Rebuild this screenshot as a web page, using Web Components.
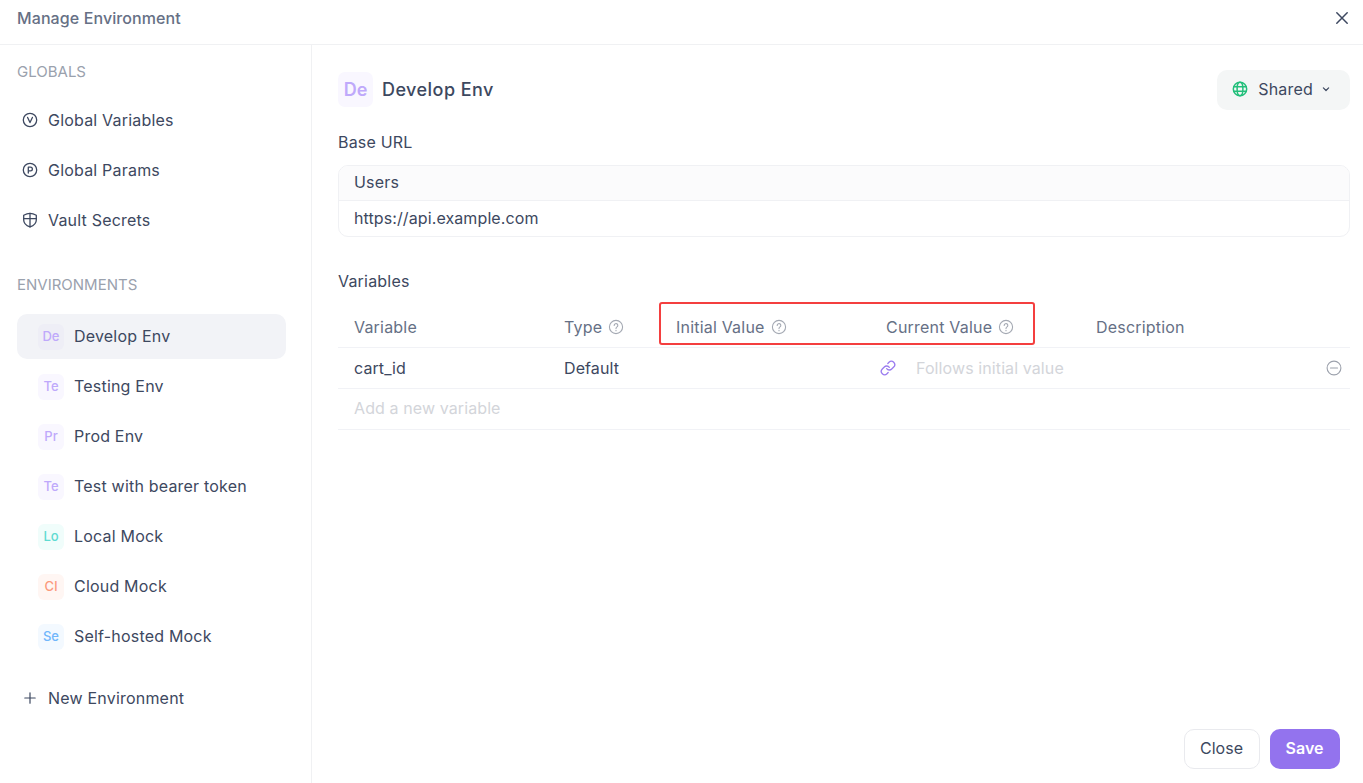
<!DOCTYPE html>
<html>
<head>
<meta charset="utf-8">
<title>Manage Environment</title>
<style>
  html,body{margin:0;height:100%;overflow:hidden;background:#fff;}
  body{font-family:Inter,"Liberation Sans",sans-serif;font-size:16px;color:#3d4860;}
</style>
</head>
<body>
<env-dialog>
  <env-sidebar slot="side"></env-sidebar>
  <env-detail slot="main"></env-detail>
</env-dialog>

<script>
const ICONS = {
  v: '<circle cx="8" cy="8" r="6.7"/><path d="M5.6 5.4 8 10.6l2.4-5.200"/>',
  p: '<circle cx="8" cy="8" r="6.7"/><path d="M6.300 11V5.200h2.200a1.800 1.800 0 0 1 0 3.700H6.300"/>',
  shield: '<path d="M8 1.300c2 0 4.200.7 6.300 1.900V8c0 3.300-2.800 5.700-6.300 6.900C4.500 13.700 1.700 11.300 1.700 8V3.200C3.800 2 6 1.300 8 1.300z"/><path d="M8 1.300v13.600M1.700 6.600h12.600"/>',
  plus: '<path d="M8 2.800v10.400M2.800 8h10.400"/>',
  close: '<path d="M2.800 2.800l10.400 10.400M13.200 2.800 2.800 13.200"/>',
  globe: '<circle cx="8" cy="8" r="6.700"/><ellipse cx="8" cy="8" rx="2.900" ry="6.700"/><path d="M1.800 5.700h12.400M1.800 10.300h12.400"/>',
  chevron: '<path d="M4.500 6.500 8 10l3.500-3.500"/>',
  help: '<circle cx="8" cy="8" r="6.600"/><path d="M6.200 6.400a1.800 1.800 0 1 1 2.800 1.500c-.6.400-1 .8-1 1.500"/><path d="M8 11.200v.6"/>',
  link: '<path d="M6.670 8.670a3.330 3.330 0 0 0 5.030.36l2-2a3.330 3.330 0 0 0-4.710-4.710L7.840 3.460"/><path d="M9.330 7.330a3.330 3.330 0 0 0-5.030-.36l-2 2a3.330 3.330 0 0 0 4.710 4.710l1.140-1.140"/>',
  minus: '<circle cx="8" cy="8" r="6.900"/><path d="M4.500 8h7"/>'
};

class EnvIcon extends HTMLElement {
  connectedCallback() {
    const size = this.getAttribute('size') || 16;
    const sw = this.getAttribute('stroke') || 1.3;
    this.attachShadow({ mode: 'open' }).innerHTML = `
      <style>
        :host{display:inline-flex;flex:none;width:${size}px;height:${size}px;color:inherit;}
        svg{display:block;width:100%;height:100%;fill:none;stroke:currentColor;stroke-width:${sw};stroke-linecap:round;stroke-linejoin:round;}
      </style>
      <svg viewBox="0 0 16 16">${ICONS[this.getAttribute('name')] || ''}</svg>`;
  }
}
customElements.define('env-icon', EnvIcon);

class EnvBadge extends HTMLElement {
  connectedCallback() {
    this.attachShadow({ mode: 'open' }).innerHTML = `
      <style>
        :host{display:flex;flex:none;align-items:center;justify-content:center;box-sizing:border-box;width:26px;height:26px;border-radius:6px;
          font-size:13px;font-weight:500;line-height:1;letter-spacing:0;background:var(--badge-bg,#f9f7ff);color:var(--badge-fg,#bfa9fb);}
        :host([large]){width:35px;height:35px;border-radius:7px;font-size:18px;font-weight:600;margin-top:-1px;}
        :host([active]){background:#eeeef6;}
      </style>
      <slot></slot>`;
  }
}
customElements.define('env-badge', EnvBadge);

class NavItem extends HTMLElement {
  connectedCallback() {
    this.attachShadow({ mode: 'open' }).innerHTML = `
      <style>
        :host{display:flex;align-items:center;gap:10px;height:45px;padding:0 5px;border-radius:10px;
          font-size:16px;color:#3d4860;}
        .lead{display:flex;align-items:center;justify-content:center;width:16px;color:#3d4860;}
      </style>
      <span class="lead"><slot name="lead"></slot></span><slot></slot>`;
  }
}
customElements.define('nav-item', NavItem);

class EnvRow extends HTMLElement {
  connectedCallback() {
    this.attachShadow({ mode: 'open' }).innerHTML = `
      <style>
        :host{display:flex;align-items:center;gap:10px;height:45px;padding:0 21px;border-radius:10px;
          font-size:16px;color:#3d4860;}
        :host([active]){background:#f2f3f7;}
        .text{padding-bottom:2px;}
      </style>
      <slot name="badge"></slot><span class="text"><slot></slot></span>`;
  }
}
customElements.define('env-row', EnvRow);

class EnvSidebar extends HTMLElement {
  connectedCallback() {
    const envs = [
      ['De', 'Develop Env', '', true],
      ['Te', 'Testing Env'],
      ['Pr', 'Prod Env'],
      ['Te', 'Test with bearer token'],
      ['Lo', 'Local Mock', '--badge-bg:#f0fdfb;--badge-fg:#5edbd2'],
      ['Cl', 'Cloud Mock', '--badge-bg:#fff6f3;--badge-fg:#fb9a7b'],
      ['Se', 'Self-hosted Mock', '--badge-bg:#f3f9ff;--badge-fg:#70b6fb']
    ];
    this.attachShadow({ mode: 'open' }).innerHTML = `
      <style>
        :host{display:flex;flex-direction:column;width:312px;height:100%;box-sizing:border-box;flex:none;
          border-right:1px solid #f0f1f3;padding:17px 25px 0 17px;}
        .label{font-size:15px;line-height:20px;color:#9aa1ad;letter-spacing:0;}
        .list{display:flex;flex-direction:column;gap:5px;}
        .globals{margin-top:15px;}
        .second{margin-top:33px;}
        .envs{margin-top:19px;}
        .add{margin-top:16px;}
      </style>
      <div class="label">GLOBALS</div>
      <div class="list globals">
        <nav-item><env-icon slot="lead" name="v"></env-icon>Global Variables</nav-item>
        <nav-item><env-icon slot="lead" name="p"></env-icon>Global Params</nav-item>
        <nav-item><env-icon slot="lead" name="shield"></env-icon>Vault Secrets</nav-item>
      </div>
      <div class="label second">ENVIRONMENTS</div>
      <div class="list envs">
        ${envs.map(([b, t, s, a]) => `<env-row ${a ? 'active' : ''} style="${s || ''}"><env-badge slot="badge" ${a ? 'active' : ''}>${b}</env-badge>${t}</env-row>`).join('')}
      </div>
      <div class="add"><nav-item><env-icon slot="lead" name="plus" stroke="1.200"></env-icon>New Environment</nav-item></div>`;
  }
}
customElements.define('env-sidebar', EnvSidebar);

class ColHead extends HTMLElement {
  connectedCallback() {
    this.attachShadow({ mode: 'open' }).innerHTML = `
      <style>
        :host{display:flex;align-items:center;gap:6px;font-size:16px;color:#667085;padding-bottom:2px;}
        env-icon{color:#a4a9b3;}
      </style>
      <slot></slot>${this.hasAttribute('help') ? '<env-icon name="help" size="16" stroke="1.100"></env-icon>' : ''}`;
  }
}
customElements.define('col-head', ColHead);

class VarTable extends HTMLElement {
  connectedCallback() {
    this.attachShadow({ mode: 'open' }).innerHTML = `
      <style>
        :host{display:block;position:relative;margin-top:15px;}
        .row{display:grid;grid-template-columns:210px 112px 210px 210px 1fr;align-items:center;padding-left:16px;
          border-bottom:1px solid #f1f2f6;height:40px;letter-spacing:.1px;}
        .row.head{height:39px;letter-spacing:.2px;}
        .type,.name{color:#3d4860;}
        .current{display:flex;align-items:center;position:relative;}
        .placeholder{color:#d3d5da;}
        .link{position:absolute;left:-6px;color:#9a7bef;}
        .current span{padding-left:30px;}
        .remove{justify-self:end;margin-right:8px;color:#9ca1ac;}
        .add{padding-bottom:2px;grid-column:1/3;}
        .mark{position:absolute;left:321px;top:-6px;width:372px;height:39px;border:2px solid #f43f3f;border-radius:3px;}
      </style>
      <div class="row head">
        <col-head>Variable</col-head>
        <col-head help>Type</col-head>
        <col-head help>Initial Value</col-head>
        <col-head help>Current Value</col-head>
        <col-head>Description</col-head>
      </div>
      <div class="row">
        <div class="name">cart_id</div>
        <div class="type">Default</div>
        <div></div>
        <div class="current"><env-icon class="link" name="link" stroke="1.300"></env-icon><span class="placeholder">Follows initial value</span></div>
        <env-icon class="remove" name="minus" stroke="1.100"></env-icon>
      </div>
      <div class="row"><div class="placeholder add">Add a new variable</div></div>
      <div class="mark"></div>`;
  }
}
customElements.define('var-table', VarTable);

class EnvDetail extends HTMLElement {
  connectedCallback() {
    this.attachShadow({ mode: 'open' }).innerHTML = `
      <style>
        :host{display:flex;flex-direction:column;flex:1;min-width:0;height:100%;box-sizing:border-box;padding:25px 13px 14px 26px;color:#3d4860;}
        .top{display:flex;align-items:center;justify-content:space-between;height:40px;}
        .who{display:flex;align-items:center;gap:9px;font-size:18px;font-weight:500;letter-spacing:.45px;}
        .who span{padding-bottom:2px;}
        .share{display:flex;align-items:center;height:40px;box-sizing:border-box;padding:0 18px 2px 15px;background:#f4f6f6;border-radius:10px;font-size:16px;}
        .share .globe{color:#23bf7b;margin-right:10px;}
        .share .chev{margin-left:7px;}
        .section{font-size:16px;line-height:24px;}
        .url{margin-top:11px;border:1px solid #f0f1f4;border-radius:10px;overflow:hidden;}
        .url div{height:35px;box-sizing:border-box;display:flex;align-items:center;padding:0 0 2px 15px;}
        .url .name{background:#fbfbfc;border-bottom:1px solid #f0f1f4;}
        .url .value{letter-spacing:.1px;}
        .foot{margin-top:auto;display:flex;justify-content:flex-end;gap:10px;padding-right:10px;}
        button{font:inherit;letter-spacing:0;height:40px;border-radius:10px;box-sizing:border-box;padding:0 1px 2px 0;}
        .close{width:76px;background:#fff;border:1px solid #e9eaee;color:#3d4860;}
        .save{width:70px;background:#9373ee;border:0;color:#fff;font-weight:600;}
      </style>
      <div class="top">
        <div class="who"><env-badge large>De</env-badge><span>Develop Env</span></div>
        <div class="share"><env-icon class="globe" name="globe" stroke="1.500"></env-icon>Shared<env-icon class="chev" name="chevron" size="12" stroke="1.600"></env-icon></div>
      </div>
      <div class="section" style="margin-top:20px">Base URL</div>
      <div class="url"><div class="name">Users</div><div class="value">https://api.example.com</div></div>
      <div class="section" style="margin-top:32px">Variables</div>
      <var-table></var-table>
      <div class="foot"><button class="close">Close</button><button class="save">Save</button></div>`;
  }
}
customElements.define('env-detail', EnvDetail);

class EnvDialog extends HTMLElement {
  connectedCallback() {
    this.attachShadow({ mode: 'open' }).innerHTML = `
      <style>
        :host{display:flex;flex-direction:column;height:100vh;background:#fff;letter-spacing:.2px;}
        header{display:flex;align-items:center;justify-content:space-between;height:36px;flex:none;
          padding:0 13px 8px 17px;border-bottom:1px solid #f0f1f3;color:#667085;font-size:16px;font-weight:500;letter-spacing:.1px;}
        header env-icon{color:#3d4860;}
        .body{display:flex;flex:1;min-height:0;}
      </style>
      <header><span>Manage Environment</span><env-icon name="close" size="16" stroke="1.500"></env-icon></header>
      <div class="body"><slot name="side"></slot><slot name="main"></slot></div>`;
  }
}
customElements.define('env-dialog', EnvDialog);
</script>
</body>
</html>
